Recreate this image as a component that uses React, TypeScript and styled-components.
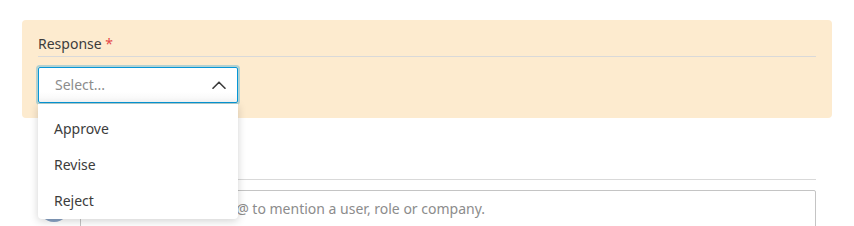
import styled, { createGlobalStyle } from 'styled-components';

const GlobalStyle = createGlobalStyle`
  body {
    margin: 0;
    background: #ffffff;
    font-family: 'Noto Sans', 'Open Sans', sans-serif;
    color: #3c3c3c;
  }
`;

const options = ['Approve', 'Revise', 'Reject'];

const ChevronUp = () => (
  <svg width="14" height="8" viewBox="0 0 14 8" fill="none">
    <path d="M1 7.2 L7 1.2 L13 7.2" stroke="#3c3c3c" strokeWidth="1.6" strokeLinecap="round" strokeLinejoin="round" />
  </svg>
);

const App = (): JSX.Element => {
  return (
    <>
      <GlobalStyle />
      <Page>
        <Panel>
          <Label>
            Response <Required>*</Required>
          </Label>
          <Divider />
          <SelectWrap>
            <SelectBox>
              <Placeholder>Select...</Placeholder>
              <ChevronUp />
            </SelectBox>
            <Menu>
              {options.map((o) => (
                <MenuItem key={o}>{o}</MenuItem>
              ))}
            </Menu>
          </SelectWrap>
        </Panel>
        <Comments>
          <Divider />
          <CommentRow>
            <Avatar />
            <CommentInput>Add a comment. Use @ to mention a user, role or company.</CommentInput>
          </CommentRow>
        </Comments>
      </Page>
    </>
  );
};

export default App;

const Page = styled.div`
  padding: 20px 22px 0 22px;
  width: 810px;
`;

const Panel = styled.div`
  background-color: #fdebcf;
  border-radius: 4px;
  padding: 14px 16px 15px 16px;
  height: 98px;
  box-sizing: border-box;
`;

const Label = styled.div`
  font-size: 14px;
  line-height: 20px;
  color: #3c3c3c;
`;

const Required = styled.span`
  color: #e54848;
`;

const Divider = styled.div`
  height: 1px;
  background-color: #d9d9d9;
  margin-top: 2px;
`;

const SelectWrap = styled.div`
  position: relative;
  width: 200px;
  margin-top: 10px;
  z-index: 5;
`;

const SelectBox = styled.div`
  display: flex;
  align-items: center;
  justify-content: space-between;
  height: 36px;
  box-sizing: border-box;
  padding: 0 11px 1px 16px;
  border: 1px solid #0696d7;
  border-radius: 2px;
  background: linear-gradient(#ffffff 70%, #f6f6f6);
  box-shadow: 0 0 0 2px rgba(6, 150, 215, 0.3);
`;

const Placeholder = styled.span`
  font-size: 14px;
  color: #8c8c8c;
`;

const Menu = styled.div`
  position: absolute;
  top: 37px;
  left: 0;
  width: 200px;
  padding: 6px 0 0 0;
  height: 115px;
  box-sizing: border-box;
  background: #ffffff;
  border-radius: 0 0 4px 4px;
  box-shadow: 0 2px 8px rgba(0, 0, 0, 0.18);
`;

const MenuItem = styled.div`
  height: 36px;
  display: flex;
  align-items: center;
  padding-left: 16px;
  font-size: 14px;
  color: #3c3c3c;
`;

const Comments = styled.div`
  padding: 0 16px;
  margin-top: 61px;
`;

const CommentRow = styled.div`
  display: flex;
  gap: 10px;
  margin-top: 10px;
`;

const Avatar = styled.div`
  width: 32px;
  height: 32px;
  border-radius: 50%;
  background-color: #8aa4c6;
  flex-shrink: 0;
`;

const CommentInput = styled.div`
  flex: 1;
  height: 48px;
  box-sizing: border-box;
  border: 1px solid #c4c4c4;
  border-radius: 2px;
  padding: 8px 15px;
  font-size: 14px;
  color: #8c8c8c;
`;
